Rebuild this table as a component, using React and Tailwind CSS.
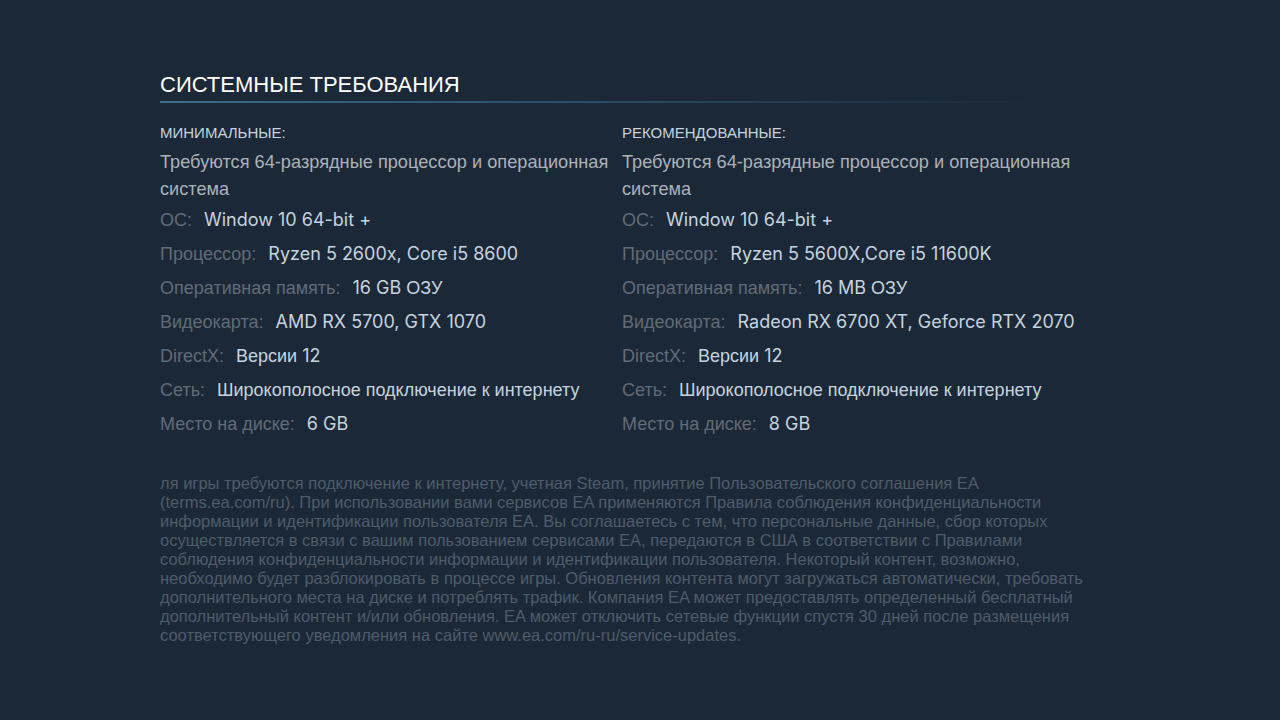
const labelFont = { fontFamily: '"Liberation Sans", Arial, sans-serif' };
const valueFont = { fontFamily: 'Inter, "Noto Sans", sans-serif' };

const columns = [
  {
    title: 'МИНИМАЛЬНЫЕ:',
    rows: [
      ['ОС:', 'Window 10 64-bit +'],
      ['Процессор:', 'Ryzen 5 2600x, Core i5 8600'],
      ['Оперативная память:', '16 GB ОЗУ'],
      ['Видеокарта:', 'AMD RX 5700, GTX 1070'],
      ['DirectX:', 'Версии 12'],
      ['Сеть:', 'Широкополосное подключение к интернету'],
      ['Место на диске:', '6 GB']
    ]
  },
  {
    title: 'РЕКОМЕНДОВАННЫЕ:',
    rows: [
      ['ОС:', 'Window 10 64-bit +'],
      ['Процессор:', 'Ryzen 5 5600X,Core i5 11600K'],
      ['Оперативная память:', '16 MB ОЗУ'],
      ['Видеокарта:', 'Radeon RX 6700 XT, Geforce RTX 2070'],
      ['DirectX:', 'Версии 12'],
      ['Сеть:', 'Широкополосное подключение к интернету'],
      ['Место на диске:', '8 GB']
    ]
  }
];

const notice =
  'ля игры требуются подключение к интернету, учетная Steam, принятие Пользовательского соглашения EA (terms.ea.com/ru). При использовании вами сервисов EA применяются Правила соблюдения конфиденциальности информации и идентификации пользователя EA. Вы соглашаетесь с тем, что персональные данные, сбор которых осуществляется в связи с вашим пользованием сервисами EA, передаются в США в соответствии с Правилами соблюдения конфиденциальности информации и идентификации пользователя. Некоторый контент, возможно, необходимо будет разблокировать в процессе игры. Обновления контента могут загружаться автоматически, требовать дополнительного места на диске и потреблять трафик. Компания EA может предоставлять определенный бесплатный дополнительный контент и/или обновления. EA может отключить сетевые функции спустя 30 дней после размещения соответствующего уведомления на сайте www.ea.com/ru-ru/service-updates.';

// latin parts use the UI font, cyrillic falls back to Arial like on the store page
const CYRILLIC = /([\u0400-\u04FF]+(?:\s+[\u0400-\u04FF]+)*)/;

function Value({ text }) {
  return text.split(CYRILLIC).map((part, i) =>
    part === '' ? null : (
      <span key={i} style={CYRILLIC.test(part) ? labelFont : valueFont}>
        {part}
      </span>
    )
  );
}

function RequirementColumn({ title, rows }) {
  return (
    <div className="w-[462px]">
      <div className="h-[20px] text-[15px] leading-[20px] text-[#c6d4df]" style={labelFont}>
        {title}
      </div>
      <ul className="mt-[6px]">
        <li className="mb-[-1px] text-[18.2px] leading-[27px] text-[#acb2b8]" style={labelFont}>
          Требуются 64-разрядные процессор и операционная система
        </li>
        {rows.map(([label, value]) => (
          <li key={label} className="h-[34px] whitespace-nowrap text-[18px] leading-[34px]">
            <span className="mr-[12px] text-[#626b75]" style={labelFont}>
              {label}
            </span>
            <span className="text-[#c6d4df]">
              <Value text={value} />
            </span>
          </li>
        ))}
      </ul>
    </div>
  );
}

export default function App() {
  return (
    <div className="min-h-[720px] bg-[#1b2838] pt-[70px]">
      <div className="ml-[160px] w-[940px]">
        <h2 className="text-[22px] uppercase leading-[30px] text-white" style={labelFont}>
          Системные требования
        </h2>
        <div className="mt-[1px] h-[2px] w-[880px] bg-gradient-to-r from-[#3b6e8c] to-transparent" />
        <div className="mt-[20px] flex">
          {columns.map((col) => (
            <RequirementColumn key={col.title} {...col} />
          ))}
        </div>
        <p className="mt-[34px] text-[16.5px] leading-[19px] text-[#4f5c69]" style={labelFont}>
          {notice}
        </p>
      </div>
    </div>
  );
}
